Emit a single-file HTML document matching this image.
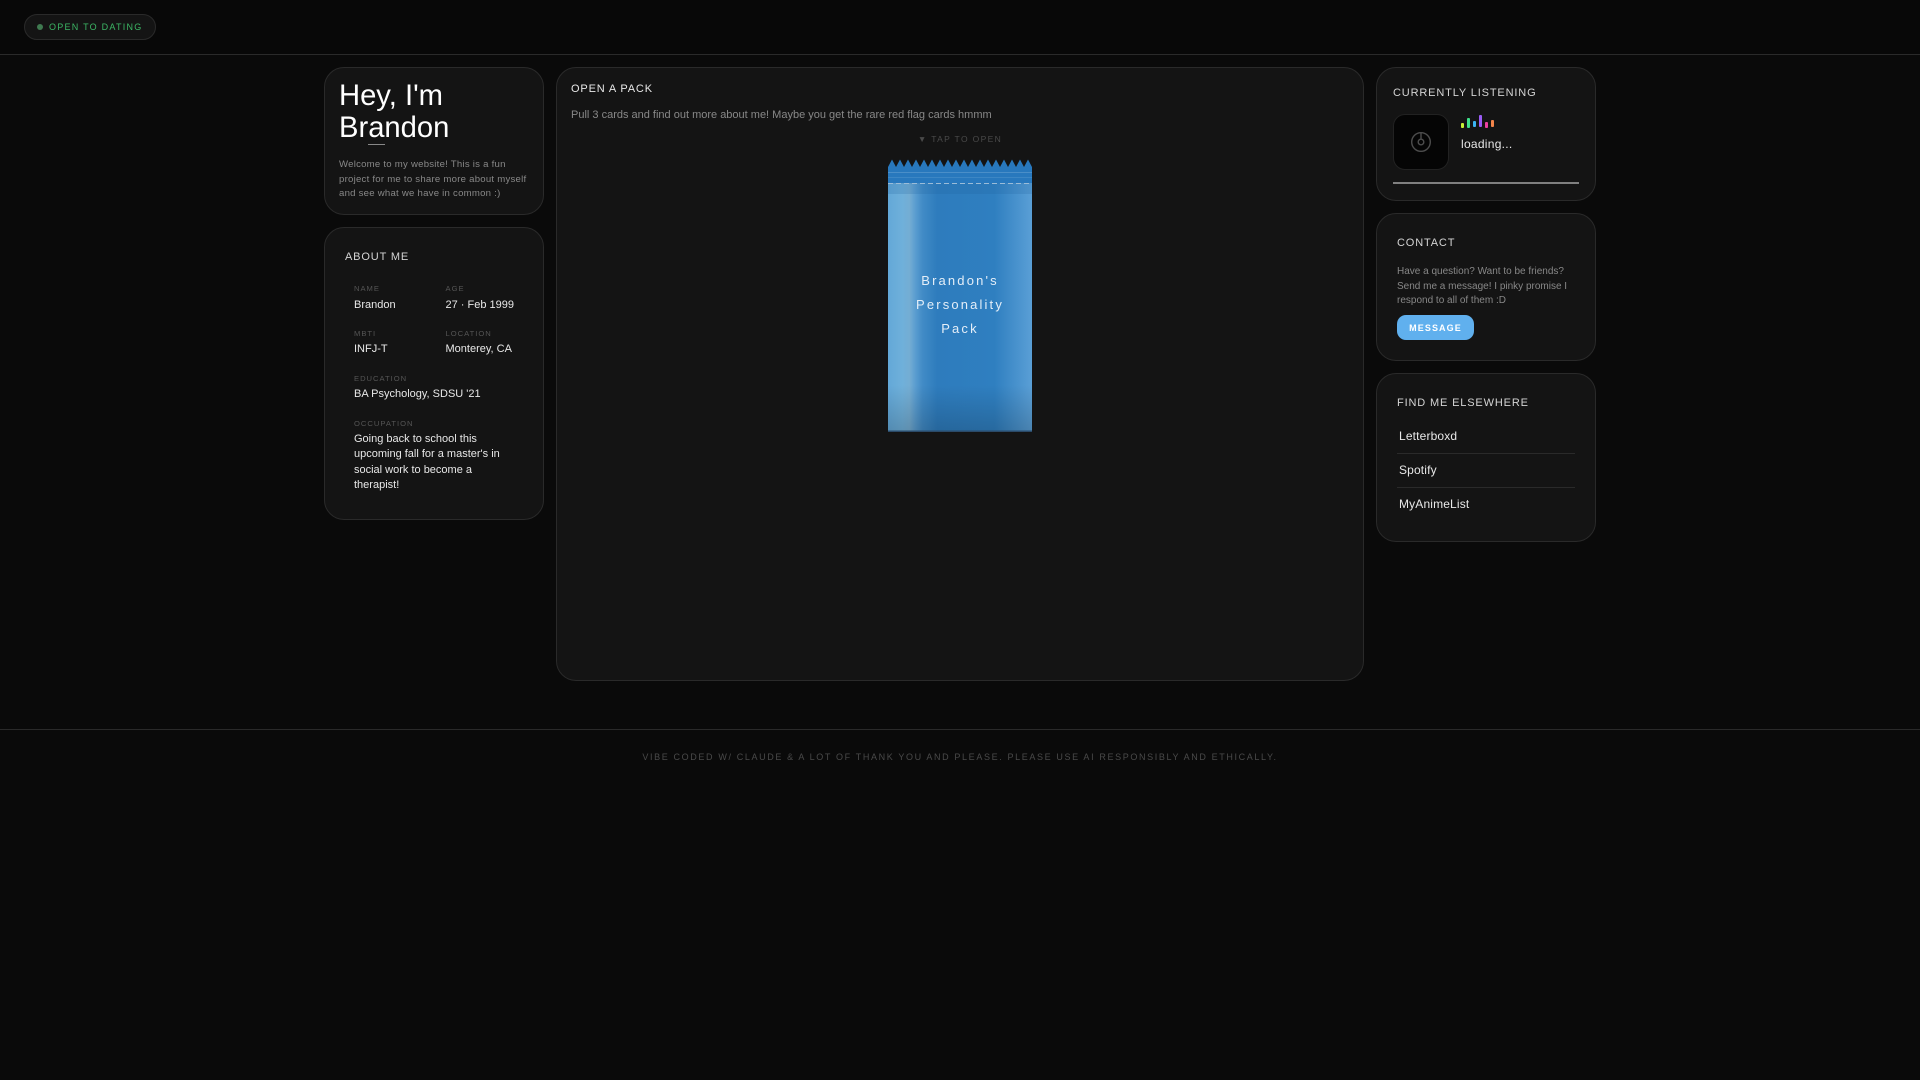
<!DOCTYPE html>
<html lang="en"><head><meta charset="utf-8"><title>Brandon</title>
<style>
*{box-sizing:border-box;margin:0;padding:0}
html,body{width:1920px;height:1080px;overflow:hidden;background:#0a0a0a;font-family:"Liberation Sans",sans-serif}
.a{position:absolute;white-space:nowrap}
.card{position:absolute;background:#141414;border:1px solid #2a2a2a;border-radius:20px}
.h{font-size:11px;line-height:14px;letter-spacing:.85px;color:#d4d4d4}
.l{font-size:7.6px;line-height:10px;letter-spacing:1px;color:#555}
.v{font-size:11px;line-height:15px;color:#e8e8e8}
.g{font-size:11px;line-height:14px;color:#888}
</style></head><body>
<div class="a" style="left:0;top:0;width:1920px;height:55px;background:#080808;border-bottom:1px solid #2a2a2a"></div>
<div class="a" style="left:24px;top:14px;width:132px;height:26px;background:#141414;border:1px solid #2a2a2a;border-radius:13px"></div>
<div class="a" style="left:37px;top:24px;width:6px;height:6px;border-radius:50%;background:#3f7a50"></div>
<div class="a" style="left:49px;top:21px;font-size:9px;line-height:12px;letter-spacing:1.25px;color:#3cb765">OPEN TO DATING</div>

<div class="card" style="left:324px;top:67px;width:220px;height:148px"></div>
<div class="a" style="left:339px;top:80px;font-size:29.2px;line-height:32px;color:#fff">Hey, I'm<br>Brandon</div>
<div class="a" style="left:368px;top:144px;width:17px;height:1px;background:#888"></div>
<div class="a g" style="left:339px;top:158px;font-size:9.6px;line-height:14.7px;letter-spacing:.24px;color:#888">Welcome to my website! This is a fun<br>project for me to share more about myself<br>and see what we have in common :)</div>

<div class="card" style="left:324px;top:227px;width:220px;height:293px"></div>
<div class="a h" style="left:345px;top:250px">ABOUT ME</div>
<div class="a l" style="left:354px;top:284px">NAME</div>
<div class="a v" style="left:354px;top:298px">Brandon</div>
<div class="a l" style="left:445.5px;top:284px">AGE</div>
<div class="a v" style="left:445.5px;top:298px">27 · Feb 1999</div>
<div class="a l" style="left:354px;top:329px">MBTI</div>
<div class="a v" style="left:354px;top:342px">INFJ-T</div>
<div class="a l" style="left:445.5px;top:329px">LOCATION</div>
<div class="a v" style="left:445.5px;top:342px">Monterey, CA</div>
<div class="a l" style="left:354px;top:374px">EDUCATION</div>
<div class="a v" style="left:354px;top:387px">BA Psychology, SDSU '21</div>
<div class="a l" style="left:354px;top:419px">OCCUPATION</div>
<div class="a v" style="left:354px;top:432px;line-height:15.3px">Going back to school this<br>upcoming fall for a master's in<br>social work to become a<br>therapist!</div>

<div class="card" style="left:556px;top:67px;width:808px;height:614px"></div>
<div class="a h" style="left:571px;top:82px;color:#e8e8e8">OPEN A PACK</div>
<div class="a g" style="left:571px;top:108px">Pull 3 cards and find out more about me! Maybe you get the rare red flag cards hmmm</div>
<div class="a" style="left:860px;top:133px;width:200px;text-align:center;font-size:8.5px;line-height:12px;letter-spacing:1.35px;color:#4a4a4a">▼ TAP TO OPEN</div>

<svg class="a" style="left:888px;top:159px" width="144" height="273" viewBox="0 0 144 273">
<defs>
<linearGradient id="b" x1="0" x2="1" y1="0" y2="0">
<stop offset="0" stop-color="#63a8d8"/><stop offset=".1" stop-color="#6fb0da"/><stop offset=".15" stop-color="#74add3"/><stop offset=".19" stop-color="#5a9dd0"/><stop offset=".24" stop-color="#418bc6"/><stop offset=".34" stop-color="#2e7cbd"/><stop offset=".74" stop-color="#2f7fc0"/><stop offset="1" stop-color="#5a9fd6"/>
</linearGradient>
<linearGradient id="d" x1="0" x2="0" y1="0" y2="1">
<stop offset="0" stop-color="#000" stop-opacity="0"/><stop offset="1" stop-color="#000" stop-opacity=".18"/>
</linearGradient>
</defs>
<path d="M0 8L4 .5L8 8L12 .5L16 8L20 .5L24 8L28 .5L32 8L36 .5L40 8L44 .5L48 8L52 .5L56 8L60 .5L64 8L68 .5L72 8L76 .5L80 8L84 .5L88 8L92 .5L96 8L100 .5L104 8L108 .5L112 8L116 .5L120 8L124 .5L128 8L132 .5L136 8L140 .5L144 8V24H0Z" fill="#2878bd"/>
<rect y="13" width="144" height="1" fill="#4a8ec8"/><rect y="18" width="144" height="1" fill="#3c86c4"/>
<rect y="24" width="144" height="249" fill="url(#b)"/>
<rect y="24" width="144" height="11" fill="#1f5f9c" opacity=".2"/>
<line x1="0" y1="24.5" x2="144" y2="24.5" stroke="#9bbcd8" stroke-width="1" stroke-dasharray="5 3"/>
<rect y="226" width="144" height="47" fill="url(#d)"/>
<rect y="271.5" width="144" height="1.5" fill="#2b4a68"/>
</svg>
<div class="a" style="left:888px;top:269px;width:144px;text-align:center;font-size:13px;line-height:24px;letter-spacing:2.15px;color:#e4eef8">Brandon's<br>Personality<br>Pack</div>

<div class="card" style="left:1376px;top:67px;width:220px;height:134px"></div>
<div class="a h" style="left:1393px;top:86px">CURRENTLY LISTENING</div>
<div class="a" style="left:1393px;top:114px;width:56px;height:56px;background:#050505;border:1px solid #222;border-radius:12px"></div>
<svg class="a" style="left:1410px;top:131px" width="22" height="22" viewBox="0 0 22 22" fill="none" stroke="#4d4d4d" stroke-width="1.4"><circle cx="11" cy="11" r="9.3"/><circle cx="11" cy="11" r="2.8"/><line x1="11" y1="2" x2="11" y2="8"/></svg>
<div class="a" style="left:1461px;top:123px;width:3px;height:5px;border-radius:1px;background:#c6f135"></div>
<div class="a" style="left:1467px;top:118px;width:3px;height:10px;border-radius:1px;background:#3fe08a"></div>
<div class="a" style="left:1473px;top:121px;width:3px;height:6px;border-radius:1px;background:#3bb4f2"></div>
<div class="a" style="left:1479px;top:115px;width:3px;height:12px;border-radius:1px;background:#9a5cf5"></div>
<div class="a" style="left:1485px;top:122px;width:3px;height:6px;border-radius:1px;background:#ec3fa0"></div>
<div class="a" style="left:1491px;top:120px;width:3px;height:7px;border-radius:1px;background:#f4854a"></div>
<div class="a" style="left:1461px;top:136.5px;font-size:12px;line-height:15px;letter-spacing:.28px;color:#e8e8e8">loading...</div>
<div class="a" style="left:1393px;top:182px;width:186px;height:2px;background:#808080"></div>

<div class="card" style="left:1376px;top:213px;width:220px;height:148px"></div>
<div class="a h" style="left:1397px;top:236px">CONTACT</div>
<div class="a g" style="left:1397px;top:265px;font-size:10px;line-height:14.5px">Have a question? Want to be friends?<br>Send me a message! I pinky promise I<br>respond to all of them :D</div>
<div class="a" style="left:1397px;top:315px;width:77px;height:25px;border-radius:9px;background:#60b0ee;color:#fff;font-size:9px;font-weight:700;line-height:26px;letter-spacing:1.1px;text-align:center">MESSAGE</div>

<div class="card" style="left:1376px;top:373px;width:220px;height:169px"></div>
<div class="a h" style="left:1397px;top:396px">FIND ME ELSEWHERE</div>
<div class="a v" style="left:1399px;top:429px;font-size:12px;letter-spacing:.15px">Letterboxd</div>
<div class="a" style="left:1397px;top:453px;width:178px;height:1px;background:#2a2a2a"></div>
<div class="a v" style="left:1399px;top:463px;font-size:12px;letter-spacing:.15px">Spotify</div>
<div class="a" style="left:1397px;top:487px;width:178px;height:1px;background:#2a2a2a"></div>
<div class="a v" style="left:1399px;top:497px;font-size:12px;letter-spacing:.15px">MyAnimeList</div>

<div class="a" style="left:0;top:729px;width:1920px;height:1px;background:#2a2a2a"></div>
<div class="a" style="left:0;top:751px;width:1920px;text-align:center;font-size:9px;line-height:12px;letter-spacing:1.63px;color:#4a4a4a">VIBE CODED W/ CLAUDE &amp; A LOT OF THANK YOU AND PLEASE. PLEASE USE AI RESPONSIBLY AND ETHICALLY.</div>
</body></html>
